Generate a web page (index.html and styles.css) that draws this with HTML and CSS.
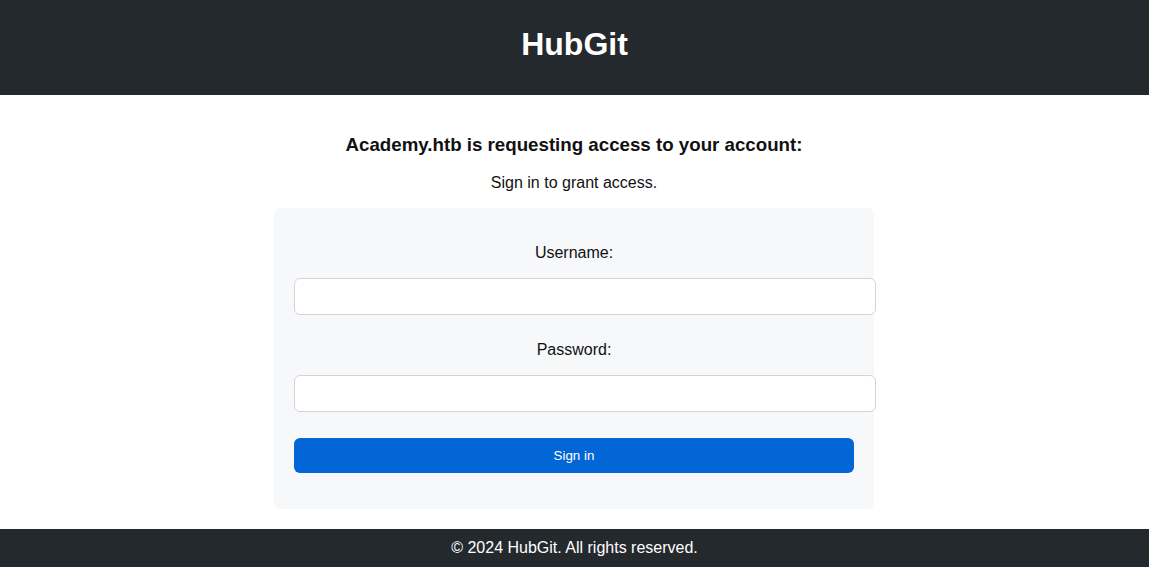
FILE: index.html
```html
<!DOCTYPE html>
<html lang="en">
<head>
<meta charset="utf-8">
<title>HubGit - Sign in</title>
<link rel="stylesheet" href="styles.css">
</head>
<body>
<header class="site-header">
  <h1 class="brand">HubGit</h1>
</header>
<main class="main">
  <h3 class="request-title">Academy.htb is requesting access to your account:</h3>
  <p class="request-sub">Sign in to grant access.</p>
  <form class="login-box">
    <label class="field-label" for="username">Username:</label>
    <input class="field-input" type="text" id="username" name="username">
    <label class="field-label" for="password">Password:</label>
    <input class="field-input" type="password" id="password" name="password">
    <button class="submit-btn" type="submit">Sign in</button>
  </form>
</main>
<footer class="site-footer">© 2024 HubGit. All rights reserved.</footer>
</body>
</html>
```

FILE: styles.css
```css
* { box-sizing: content-box; }
html, body { margin: 0; padding: 0; }
body {
  font-family: "Liberation Sans", Arial, sans-serif;
  font-size: 16px;
  color: #111;
  background: #fff;
}
.site-header {
  background: #24292e;
  color: #fff;
  text-align: center;
}
.brand {
  margin: 0;
  font-size: 32px;
  line-height: 37px;
  padding: 26px 0 32px;
}
.main {
  padding: 20px 1px 20px 0;
  text-align: center;
}
.request-title {
  font-size: 18.72px;
  font-weight: bold;
  margin: 18.72px 0;
}
.request-sub {
  margin: 16px 0;
}
.login-box {
  width: 560px;
  margin: 0 auto;
  padding: 20px;
  background: #f6f8fa;
  border-radius: 6px;
  text-align: center;
  display: flex;
  flex-direction: column;
}
.field-label {
  display: block;
  margin: 16px 0 16px;
}
.field-input + .field-label { margin-top: 26px; }
.field-input {
  display: block;
  width: 100%;
  padding: 10px;
  margin: 0;
  border: 1px solid #d1d5da;
  border-radius: 6px;
  background: #fff;
  font-family: "Liberation Sans", Arial, sans-serif;
  font-size: 13.33px;
  line-height: 15px;
}
.submit-btn {
  display: block;
  width: 100%;
  margin-top: 26px;
  margin-bottom: 16px;
  padding: 10px 0;
  border: none;
  border-radius: 6px;
  background: #0366d6;
  color: #fff;
  font-family: "Liberation Sans", Arial, sans-serif;
  font-size: 13.33px;
  line-height: 15px;
  cursor: pointer;
}
.site-footer {
  background: #24292e;
  color: #fff;
  text-align: center;
  padding: 10px 0;
  line-height: 18px;
}
```
